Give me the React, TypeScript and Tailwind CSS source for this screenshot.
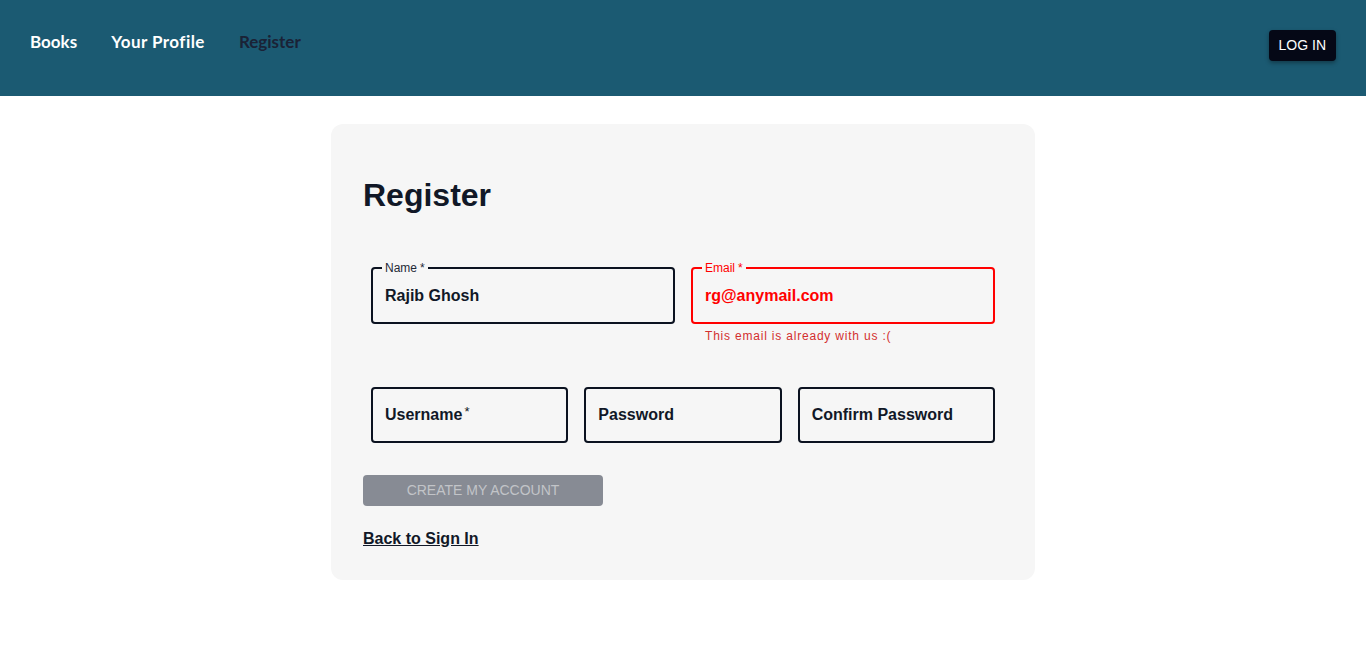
import React from "react";

function OutlinedField({
  label,
  value,
  error,
}: {
  label: string;
  value?: string;
  error?: boolean;
}) {
  const border = error ? "border-[#ff0000]" : "border-[#0b1220]";
  if (value !== undefined) {
    return (
      <div className={`relative h-[57px] rounded-[4px] border-2 ${border} flex items-center px-[12px]`}>
        <span
          className={`absolute -top-[8px] left-[9px] px-[3px] bg-[#f6f6f6] text-[12px] leading-[14px] ${
            error ? "text-[#ff0000]" : "text-[#1f2937]"
          }`}
        >
          {label}
          <span className="ml-[3px]">*</span>
        </span>
        <span className={`text-[16px] font-bold ${error ? "text-[#ff0000]" : "text-[#111827]"}`}>{value}</span>
      </div>
    );
  }
  return (
    <div className={`h-[56px] rounded-[4px] border-2 ${border} flex items-center px-[12px]`}>
      <span className="text-[16px] font-bold text-[#111827]">{label}</span>
    </div>
  );
}

export default function App() {
  return (
    <div className="min-h-[657px] bg-white" style={{ fontFamily: "'Liberation Sans', Arial, sans-serif" }}>
      <header className="h-[96px] bg-[#1b5a72] flex items-start justify-between px-[30px]">
        <nav
          className="flex items-center gap-[34px] h-[84px] text-[17px] font-bold"
          style={{ fontFamily: "Lato, 'Open Sans', sans-serif" }}
        >
          <span className="text-white">Books</span>
          <span className="text-white tracking-[0.45px]">Your Profile</span>
          <span className="text-[#1a2236]">Register</span>
        </nav>
        <button className="mt-[30px] h-[31px] px-[10px] rounded-[4px] bg-[#050816] text-white text-[14px] shadow-[0_2px_4px_rgba(0,0,0,0.35)]">
          LOG IN
        </button>
      </header>

      <main className="flex justify-center">
        <div className="mt-[28px] w-[704px] rounded-xl bg-[#f6f6f6] px-8 pt-[51px] pb-[29px]">
          <h1 className="text-[32px] leading-[40px] font-bold text-[#111827]">Register</h1>

          <div className="mt-[52px] px-2 grid grid-cols-2 gap-4">
            <div>
              <OutlinedField label="Name" value="Rajib Ghosh" />
            </div>
            <div>
              <OutlinedField label="Email" value="rg@anymail.com" error />
              <p className="mt-[4px] ml-[14px] text-[12px] leading-[16px] text-[#d32f2f] tracking-[0.8px]">
                This email is already with us :(
              </p>
            </div>
          </div>

          <div className="mt-[43px] px-2 grid grid-cols-3 gap-4">
            <div className="h-[56px] rounded-[4px] border-2 border-[#0b1220] flex items-center px-[12px]">
              <span className="text-[16px] font-bold text-[#111827]">
                Username<span className="ml-[2px] text-[13px] font-normal align-top relative top-[-1px]">*</span>
              </span>
            </div>
            <OutlinedField label="Password" />
            <OutlinedField label="Confirm Password" />
          </div>

          <button className="mt-[32px] w-[240px] h-[31px] pb-[1px] rounded-[4px] bg-[#878b94] text-[#c2c4c8] text-[14px] uppercase">
            Create my account
          </button>

          <div className="mt-[21px]">
            <a className="text-[16px] leading-[24px] font-bold text-[#111827] underline">Back to Sign In</a>
          </div>
        </div>
      </main>
    </div>
  );
}
